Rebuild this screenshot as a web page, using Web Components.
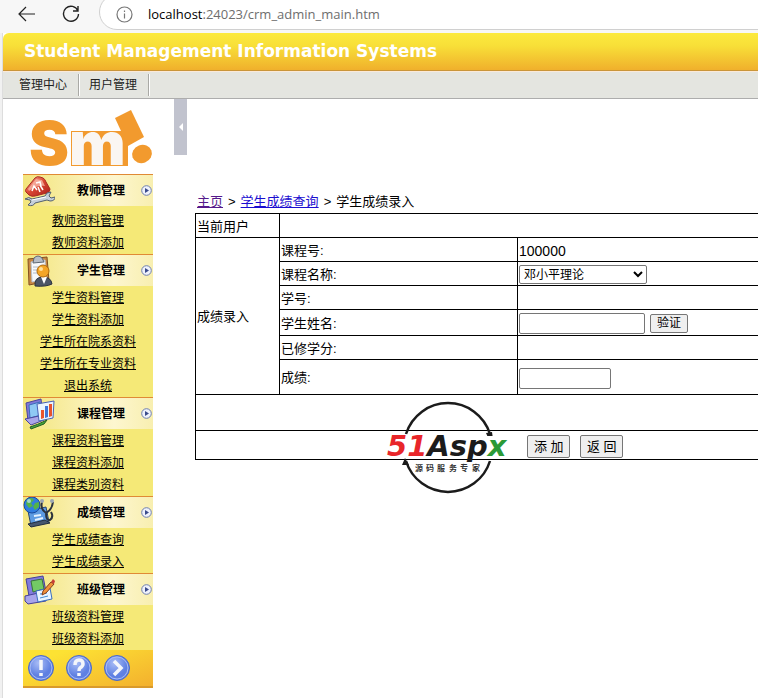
<!DOCTYPE html>
<html lang="zh-CN">
<head>
<meta charset="utf-8">
<meta name="viewport" content="width=device-width, initial-scale=1">
<title>Student Management Information Systems</title>
<style>
  body {
    margin: 0;
    background: #fff;
    color: #000;
    font: 12px/22px "Liberation Sans", "Noto Sans CJK SC", sans-serif;
    overflow-x: hidden;
  }
</style>
</head>
<body>
<browser-bar host="localhost" path=":24023/crm_admin_main.htm"></browser-bar>
<admin-shell>
  <span slot="title">Student Management Information Systems</span>
  <a slot="menu" href="#">管理中心</a>
  <a slot="menu" href="#">用户管理</a>

  <side-nav slot="side">
    <side-group label="教师管理" roomy>
      <svg slot="icon" width="32" height="32" viewBox="0 0 32 32">
        <defs>
          <linearGradient id="gem" x1="0" y1="0" x2="1" y2="1"><stop offset="0" stop-color="#ffb6a4"/><stop offset=".45" stop-color="#dc4a36"/><stop offset="1" stop-color="#a81c18"/></linearGradient>
        </defs>
        <path d="M3 14 12 3q2-2 5-1l3 1q2 1 3 4l4 7q0 3-3 4l-12 3q-3 1-6-1l-3-3q-1-1 0-3z" fill="url(#gem)" stroke="#a82b20"/>
        <path d="M5 14 13 4l6 1 3 6q-8-1-16 5z" fill="#fbc3b5" opacity=".7"/>
        <path d="M9 16l2-5 3 4M13 8l4-1 1 4M17 10l3 5M15 12l2 5" fill="none" stroke="#fff" stroke-width="1.5"/>
        <path d="M2 24q4-3 7 0l13-3q1-4 6-4l-2 4 2 2 4-1q0 4-5 4l-3-1-12 3q-2 4-7 2l3-3-1-2z" fill="#c5cfdb" stroke="#53606f"/>
        <path d="M9 25l14-3" stroke="#fff"/>
      </svg>
      <a href="#">教师资料管理</a>
      <a href="#">教师资料添加</a>
    </side-group>
    <side-group label="学生管理">
      <svg slot="icon" width="32" height="32" viewBox="0 0 32 32">
        <path d="M5 4 24 2l2 24-20 4z" fill="#c98742" stroke="#835020"/>
        <path d="M8 7 22 5l1 19-14 3z" fill="#f7f9fc" stroke="#b9c2ce"/>
        <path d="M11 3q4-4 8 0l2 4-11 1z" fill="#b7bdc6" stroke="#5f6975"/>
        <path d="M10 12h6M10 15h4M10 18h4" stroke="#adb8c8"/>
        <path d="M12 31q-1-9 8-9 8 0 9 7-6 3-17 2z" fill="#4c5566" stroke="#2b323d"/>
        <path d="M18 22l3 7 3-7z" fill="#fff"/>
        <circle cx="20" cy="16" r="6" fill="#f4a526" stroke="#b36c0d"/>
        <circle cx="18" cy="14" r="2" fill="#ffe09a"/>
      </svg>
      <a href="#">学生资料管理</a>
      <a href="#">学生资料添加</a>
      <a href="#">学生所在院系资料</a>
      <a href="#">学生所在专业资料</a>
      <a href="#">退出系统</a>
    </side-group>
    <side-group label="课程管理">
      <svg slot="icon" width="32" height="32" viewBox="0 0 32 32">
        <path d="M3 5 18 1l2 18-15 4z" fill="#7f78d8" stroke="#4a449c"/>
        <path d="M6 7 17 4l1 13-11 3z" fill="#8fc9f4" stroke="#3b6cb7"/>
        <path d="M2 21l14-3 5 4-13 5z" fill="#aaa5e8" stroke="#4a449c"/>
        <path d="M14 6 31 3l-1 17-14 3z" fill="#eaf4ff" stroke="#4761b5"/>
        <path d="M18 21v-9h3v8z" fill="#e8542d"/>
        <path d="M22 20V8h3v11z" fill="#3d74d7"/>
        <path d="M26 19V6h3v12z" fill="#e8542d"/>
        <path d="M7 29q7-2 17-7l-3 4-13 5z" fill="#45a63d" stroke="#245d22"/>
      </svg>
      <a href="#">课程资料管理</a>
      <a href="#">课程资料添加</a>
      <a href="#">课程类别资料</a>
    </side-group>
    <side-group label="成绩管理">
      <svg slot="icon" width="32" height="32" viewBox="0 0 32 32">
        <path d="M5 14 23 10l3 15-18 4z" fill="#5d9be2" stroke="#2c4770"/>
        <path d="M5 27l17-4 5 3-19 4z" fill="#46566f" stroke="#222e40"/>
        <circle cx="9" cy="8" r="8" fill="#2f7de0" stroke="#1b4b9b"/>
        <path d="M4 3q5-4 7 0l-3 3 2 3-4 2-3-4zM12 6l4-1v5l-4 3-2-3z" fill="#54b348"/>
        <circle cx="6" cy="4" r="2" fill="#c5e7ff" opacity=".7"/>
        <path d="M19 5q-2 7 4 11 6-3 7-11M23 16q0 8 4 7 4-3 1-8" fill="none" stroke="#2c333e" stroke-width="2"/>
        <circle cx="19" cy="4" r="2" fill="#9ba6b4"/><circle cx="29" cy="4" r="2" fill="#9ba6b4"/>
        <path d="M11 19l7-1M12 23l8-2" fill="none" stroke="#e3f1ff" stroke-width="2"/>
      </svg>
      <a href="#">学生成绩查询</a>
      <a href="#">学生成绩录入</a>
    </side-group>
    <side-group label="班级管理">
      <svg slot="icon" width="32" height="32" viewBox="0 0 32 32">
        <path d="M3 5 20 2l3 16-17 4z" fill="#817bdc" stroke="#453f98"/>
        <path d="M8 7 19 5l2 10-11 3z" fill="#73c965" stroke="#39733b"/>
        <path d="M2 22l18-4 5 4-2 5-18 3-3-3z" fill="#a8a4ea" stroke="#453f98"/>
        <path d="M13 17 27 14l2 11-14 3z" fill="#e9f5ff" stroke="#396ec0"/>
        <path d="M17 20l7-1M17 24l8-2" stroke="#3f8ad2"/>
        <path d="M19 21l1-4 8-9 3 2-8 9z" fill="#f19138" stroke="#85401b"/>
        <path d="M28 8l2-3 2 2-1 3z" fill="#c93d35"/>
      </svg>
      <a href="#">班级资料管理</a>
      <a href="#">班级资料添加</a>
    </side-group>
  </side-nav>

  <score-form></score-form>
</admin-shell>

<script>
// Attaches an open shadow root holding the given markup
function render(el, html) {
  const root = el.attachShadow({mode: 'open'});
  root.innerHTML = html;
  return root;
}

class BrowserBar extends HTMLElement {
  constructor() {
    super();
    render(this, `
      <style>
        * { box-sizing: border-box; }
        :host {
          display: flex;
          align-items: flex-start;
          height: 33px;
          background: #f7f7f7;
          font: 13px/28px "Open Sans", "Noto Sans", sans-serif;
          overflow: hidden;
        }
        button {
          width: 44px;
          height: 28px;
          padding: 0;
          border: 0;
          background: none;
        }
        svg { display: block; margin: 0 auto; }
        .tools { display: flex; flex: none; width: 99px; padding-left: 5px; }
        .address {
          display: flex;
          flex: 1;
          align-items: center;
          gap: 15px;
          height: 36px;
          margin: -6px -20px 0 0;
          padding: 4px 0 0 16px;
          border: 1px solid #d0d0d0;
          border-radius: 18px;
          background: #fff;
        }
        .address svg { margin: 0; }
        .path { color: #6e6e6e; }
      </style>
      <div class="tools">
        <button aria-label="Back">
          <svg width="18" height="18" viewBox="0 0 18 18" fill="none" stroke="#222" stroke-width="1.2"><path d="M17 9H2M8 2 1 9l7 7"/></svg>
        </button>
        <button aria-label="Reload">
          <svg width="18" height="18" viewBox="0 0 18 18" fill="none" stroke="#222" stroke-width="1.4"><path d="M16 6A7.500 7.500 0 1 0 16.500 9M16 1v5h-5"/></svg>
        </button>
      </div>
      <div class="address">
        <svg width="17" height="17" viewBox="0 0 17 17" fill="none" stroke="#777" stroke-width="1.2"><circle cx="8.500" cy="8.500" r="7.500"/><path d="M8.500 7.500v5M8.500 4.500v1.500"/></svg>
        <span><span class="host"></span><span class="path"></span></span>
      </div>
    `);
  }

  connectedCallback() {
    this.shadowRoot.querySelector('.host').textContent = this.getAttribute('host');
    this.shadowRoot.querySelector('.path').textContent = this.getAttribute('path');
  }
}

class AdminShell extends HTMLElement {
  constructor() {
    super();
    render(this, `
      <style>
        * { box-sizing: border-box; }
        :host {
          display: block;
          padding-left: 3px;
          background: linear-gradient(to right, #f1f1f1 2px, #ddd 2px, #ddd 3px, #fff 3px);
        }
        header {
          height: 38px;
          padding-left: 21px;
          border-bottom: 1px solid #c9953a;
          border-radius: 6px 0 0 0;
          background: linear-gradient(#fcea3e, #f8df38 35%, #f0b02c);
          color: #fff;
          font: 700 17px/37px "DejaVu Sans", sans-serif;
          white-space: nowrap;
        }
        nav {
          display: flex;
          align-items: center;
          height: 28px;
          padding-left: 6px;
          border-top: 1px solid #fbe9d8;
          border-bottom: 1px solid #adadad;
          background: #e4e5e0;
        }
        ::slotted(a) {
          padding: 0 11px 0 10px;
          border-right: 1px solid #a9a9a5;
          box-shadow: 1px 0 #fff;
          color: #222;
          text-decoration: none;
        }
        .body { display: flex; align-items: flex-start; min-height: 599px; }
        .side { flex: none; width: 171px; padding: 9px 21px 0 20px; }
        .split {
          flex: none;
          width: 13px;
          height: 56px;
          padding: 0;
          border: 0;
          background: #c1c3ce;
        }
        .split svg { display: block; margin: 0 auto; }
        main { flex: 1; min-width: 0; padding: 92px 0 0 8px; }
      </style>
      <header><slot name="title"></slot></header>
      <nav><slot name="menu"></slot></nav>
      <div class="body">
        <div class="side"><slot name="side"></slot></div>
        <button class="split" aria-label="Collapse menu">
          <svg width="6" height="8" viewBox="0 0 6 8"><path d="M5 0v8L1 4z" fill="#fff"/></svg>
        </button>
        <main><slot></slot></main>
      </div>
    `);
  }
}

class SideNav extends HTMLElement {
  constructor() {
    super();
    render(this, `
      <style>
        :host { display: block; width: 130px; }
        .logo { display: block; height: 66px; overflow: visible; }
        .logo text { font: 900 60px Inter, "Liberation Sans", sans-serif; }
        footer {
          display: flex;
          align-items: center;
          gap: 10px;
          height: 36px;
          padding-left: 4px;
          border-bottom: 2px solid #d99a2b;
          background: linear-gradient(160deg, #fde233 20%, #f3b02e);
        }
        button { padding: 0; border: 0; background: none; }
        button svg { display: block; }
      </style>
      <svg class="logo" width="130" height="66" viewBox="0 0 130 66" role="img" aria-label="Sm!">
        <text x="6" y="57" fill="#f29a2e">S</text>
        <path d="M48 23h57v35H48z" fill="#f29a2e"/>
        <text x="46" y="57" fill="#faf6f2">m</text>
        <path d="M92 10l16-8 13 27-16 9z" fill="#f29a2e"/>
        <ellipse cx="119" cy="46" rx="10" ry="9" transform="rotate(-20 119 46)" fill="#f29a2e"/>
      </svg>
      <slot></slot>
      <footer>
        <button aria-label="Notice">${this.round('<path d="M14 6v10M14 19v3"/>')}</button>
        <button aria-label="Help">${this.round('<path d="M10 11q0-5 4-5t4 4q0 2-3 4-1 1-1 3M14 19v3"/>')}</button>
        <button aria-label="Next">${this.round('<path d="M11 7l7 7-7 7"/>')}</button>
      </footer>
    `);
  }

  round(glyph) {
    return `<svg width="28" height="28" viewBox="0 0 28 28">
      <defs><radialGradient id="ball" cx=".4" cy=".3"><stop offset="0" stop-color="#a9bdf6"/><stop offset="1" stop-color="#5f80e2"/></radialGradient></defs>
      <circle cx="14" cy="14" r="12.500" fill="url(#ball)" stroke="#4a69cc"/>
      <circle cx="14" cy="14" r="11" fill="none" stroke="#a9bcf4"/>
      <g fill="none" stroke="#f4f6fb" stroke-width="3.500">${glyph}</g>
    </svg>`;
  }
}

class SideGroup extends HTMLElement {
  constructor() {
    super();
    render(this, `
      <style>
        * { box-sizing: border-box; }
        :host { display: block; background: #f5e977; }
        :host([roomy]) .links { padding-top: 4px; }
        h2 {
          display: flex;
          align-items: center;
          height: 32px;
          margin: 0;
          padding-right: 1px;
          border-top: 1px solid #e08a35;
          background: linear-gradient(to right, #f3e57c, #fdf6cf 70%, #f8efb0);
          font-size: 12px;
          line-height: 30px;
        }
        .label { flex: 1; padding-left: 22px; }
        .links { padding-top: 1px; }
        ::slotted(a) {
          display: block;
          color: #000;
          line-height: 22px;
          text-align: center;
        }
      </style>
      <h2>
        <slot name="icon"></slot>
        <span class="label"></span>
        <svg width="11" height="11" viewBox="0 0 11 11"><circle cx="5.500" cy="5.500" r="4.800" fill="#eef1fb" stroke="#6f7fae"/><path d="M4 3v5l4-2.500z" fill="#3a4b8c"/></svg>
      </h2>
      <div class="links"><slot></slot></div>
    `);
  }

  connectedCallback() {
    this.shadowRoot.querySelector('.label').textContent = this.getAttribute('label');
  }
}

class SiteStamp extends HTMLElement {
  constructor() {
    super();
    render(this, `
      <style>
        :host { display: block; pointer-events: none; }
        svg { display: block; overflow: visible; }
        .name { font: italic 700 29px "DejaVu Sans", sans-serif; }
        .motto { font: 700 8px "Noto Sans CJK SC", sans-serif; }
      </style>
      <svg width="126" height="92" viewBox="0 0 126 92">
        <g fill="none" stroke="#1b1b1b" stroke-width="2.500">
          <path d="M19 32A44 44 0 0 1 103 32"/>
          <path d="M103 59A44 44 0 0 1 19 59"/>
        </g>
        <path d="M99 31l6-1 1 7-3 3zM15 63l3-7 4 7z" fill="#1b1b1b"/>
        <path d="M2 34h119v21H2z" fill="#fff"/>
        <text class="name" x="0" y="54"><tspan fill="#e8262a">51</tspan><tspan fill="#1b1b1b">Asp</tspan><tspan fill="#2b9a37">x</tspan></text>
        <text class="motto" y="69" fill="#333" x="28 39 50 62 73 85">源码服务专家</text>
      </svg>
    `);
  }
}

class ScoreForm extends HTMLElement {
  constructor() {
    super();
    render(this, `
      <style>
        * { box-sizing: border-box; }
        :host { display: block; position: relative; font-size: 13px; line-height: 20px; }
        .crumbs { display: flex; gap: 5px; padding-left: 2px; line-height: 22px; }
        .crumbs a { color: #1a0dd0; }
        .crumbs a:first-child { color: #551a8b; }
        table {
          width: calc(100% + 2px);
          border-collapse: collapse;
          table-layout: fixed;
        }
        .group { width: 84px; }
        .field { width: 238px; }
        tr { height: 24px; }
        th, td {
          padding: 2px 1px 0;
          border: 1px solid #000;
          font-weight: 400;
          text-align: left;
        }
        .code { font-size: 14px; }
        .check { height: 26px; }
        .grade { height: 35px; }
        .note { height: 36px; }
        .submit { height: 29px; }
        .row { display: flex; align-items: center; gap: 5px; }
        .submit .row { gap: 10px; padding-left: 330px; }
        input, select {
          height: 21px;
          border: 1px solid #767676;
          border-radius: 2px;
          background: #fff;
          font: inherit;
        }
        select {
          display: block;
          width: 128px;
          height: 19px;
          padding: 0;
          font-size: 12px;
        }
        #name { width: 126px; }
        #grade { display: block; width: 92px; }
        button {
          height: 19px;
          padding: 0 6px;
          border: 1px solid #767676;
          border-radius: 2px;
          background: #efefef;
          color: #000;
          font: inherit;
          font-size: 12px;
          line-height: 17px;
          white-space: nowrap;
        }
        .submit button { width: 43px; height: 23px; font-size: 13px; }
        site-stamp { position: absolute; top: 211px; left: 192px; }
      </style>
      <nav class="crumbs">
        <a href="#">主页</a><span>&gt;</span><a href="#">学生成绩查询</a><span>&gt;</span><span>学生成绩录入</span>
      </nav>
      <form>
        <table>
          <colgroup><col class="group"><col class="field"><col></colgroup>
          <tr><th scope="row">当前用户</th><td colspan="2"></td></tr>
          <tr><th rowspan="6">成绩录入</th><th scope="row">课程号:</th><td class="code">100000</td></tr>
          <tr>
            <th><label for="course">课程名称:</label></th>
            <td><select id="course"><option>邓小平理论</option></select></td>
          </tr>
          <tr><th scope="row">学号:</th><td></td></tr>
          <tr class="check">
            <th><label for="name">学生姓名:</label></th>
            <td><div class="row"><input id="name" type="text"><button type="button">验证</button></div></td>
          </tr>
          <tr><th scope="row">已修学分:</th><td></td></tr>
          <tr class="grade">
            <th><label for="grade">成绩:</label></th>
            <td><input id="grade" type="text"></td>
          </tr>
          <tr class="note"><td colspan="3"></td></tr>
          <tr class="submit">
            <td colspan="3"><div class="row"><button type="button">添 加</button><button type="button">返 回</button></div></td>
          </tr>
        </table>
      </form>
      <site-stamp></site-stamp>
    `);
  }
}

customElements.define('browser-bar', BrowserBar);
customElements.define('admin-shell', AdminShell);
customElements.define('side-nav', SideNav);
customElements.define('side-group', SideGroup);
customElements.define('site-stamp', SiteStamp);
customElements.define('score-form', ScoreForm);
</script>
</body>
</html>
